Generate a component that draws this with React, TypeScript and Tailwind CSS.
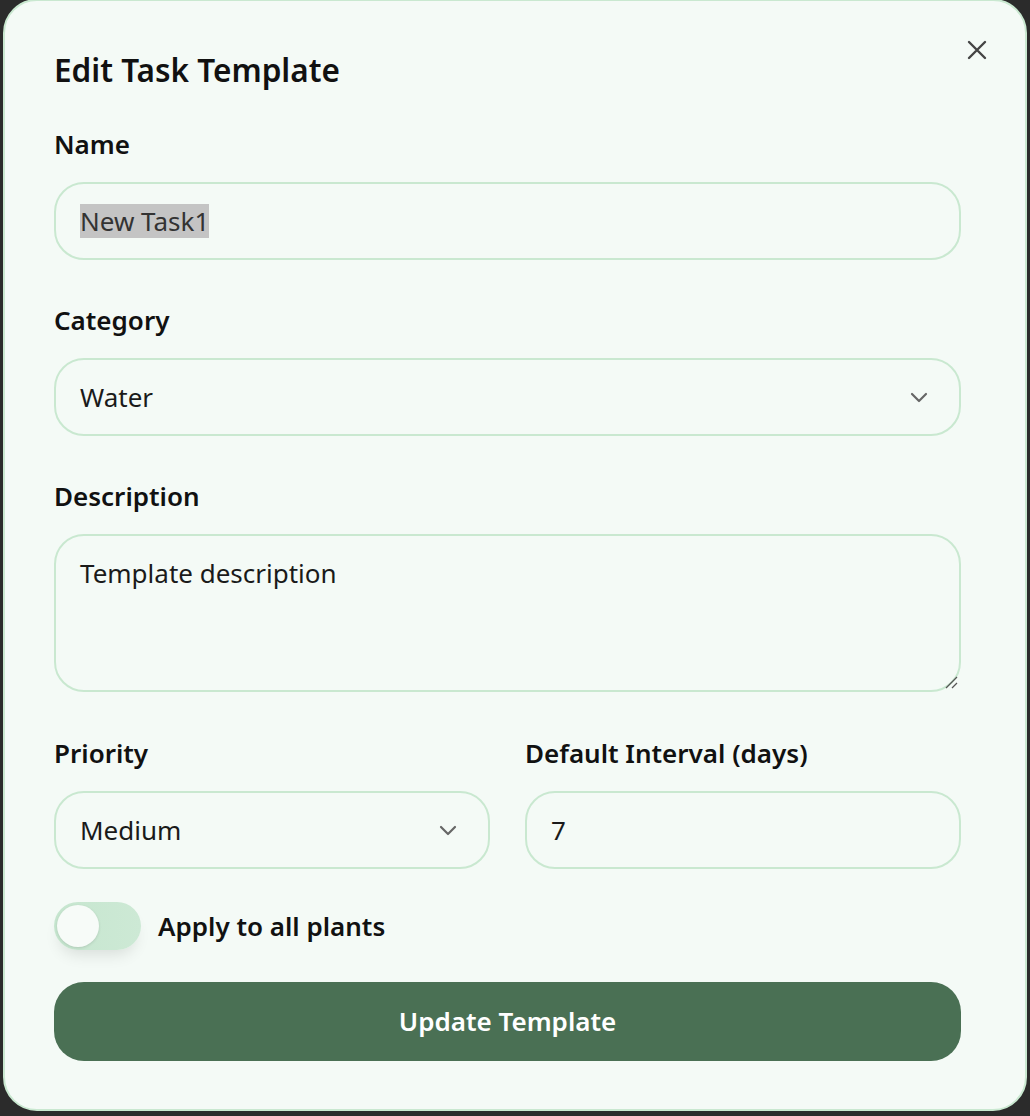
import React from 'react';

const Chevron = () => (
  <svg width="24" height="24" viewBox="0 0 24 24" fill="none" stroke="#666" strokeWidth="2.2" strokeLinecap="round" strokeLinejoin="round">
    <path d="M5 9l7 7 7-7" />
  </svg>
);

const Label = ({ children }: { children: React.ReactNode }) => (
  <div className="h-[32px] leading-[32px] text-[26px] font-semibold text-[#111] mb-[22px]">{children}</div>
);

const field =
  'h-[78px] rounded-[30px] border-2 border-[#c9e8d0] bg-[#f4faf6] px-[24px] flex items-center text-[26px] text-[#1a1a1a]';

export default function App() {
  return (
    <div className="w-[1030px] h-[1116px] bg-[#2b2b2b] pl-[3px] pr-[3px] overflow-hidden" style={{ fontFamily: '"Noto Sans", "Open Sans", sans-serif' }}>
      <div className="relative h-[1112px] -mt-[1px] rounded-[34px] border-2 border-[#c9e8d0] bg-[#f4faf6] pl-[49px] pr-[64px] pt-[47px]">
        <button className="absolute right-[36px] top-[37px] w-[24px] h-[24px] flex items-center justify-center">
          <svg width="20" height="20" viewBox="0 0 20 20" fill="none" stroke="#444" strokeWidth="2.4" strokeLinecap="round">
            <path d="M2 2l16 16M18 2L2 18" />
          </svg>
        </button>

        <h2 className="h-[44px] leading-[44px] text-[31.5px] font-semibold text-[#111] mb-[36px]">Edit Task Template</h2>

        <div className="flex flex-col gap-[44px]">
          <div>
            <Label>Name</Label>
            <div className={field}>
              <span className="bg-[#c4c4c4] text-[#333] leading-[34px]">New Task1</span>
            </div>
          </div>

          <div>
            <Label>Category</Label>
            <div className={field + ' justify-between pr-[28px]'}>
              <span>Water</span>
              <Chevron />
            </div>
          </div>

          <div>
            <Label>Description</Label>
            <div className="relative h-[158px] rounded-[30px] border-2 border-[#c9e8d0] bg-[#f4faf6] px-[24px] pt-[18px] text-[26px] text-[#1a1a1a]">
              Template description
              <svg className="absolute right-[1px] bottom-[1px]" width="14" height="14" viewBox="0 0 14 14" stroke="#555" strokeWidth="1.3">
                <path d="M2 13L13 2M8 13L13 8" />
              </svg>
            </div>
          </div>
        </div>

        <div className="grid grid-cols-2 gap-[35px] mt-[45px]">
          <div>
            <Label>Priority</Label>
            <div className={field + ' justify-between pr-[28px]'}>
              <span>Medium</span>
              <Chevron />
            </div>
          </div>
          <div>
            <Label>Default Interval (days)</Label>
            <div className={field}>
              <span>7</span>
            </div>
          </div>
        </div>

        <div className="flex items-center gap-[17px] mt-[33px]">
          <div className="relative w-[87px] h-[48px] rounded-full bg-gradient-to-r from-[#c6e6cf] to-[#cde9d5] shadow-[0_10px_16px_-6px_rgba(0,0,0,0.12)]">
            <div className="absolute left-[3px] top-[3px] w-[42px] h-[42px] rounded-full bg-[#f7fbf8] shadow-[0_1px_3px_rgba(0,0,0,0.12)]" />
          </div>
          <span className="text-[26px] font-semibold text-[#111]">Apply to all plants</span>
        </div>

        <button className="mt-[32px] w-full h-[79px] rounded-[30px] bg-[#4a7054] text-white text-[26px] font-semibold">
          Update Template
        </button>
      </div>
    </div>
  );
}
